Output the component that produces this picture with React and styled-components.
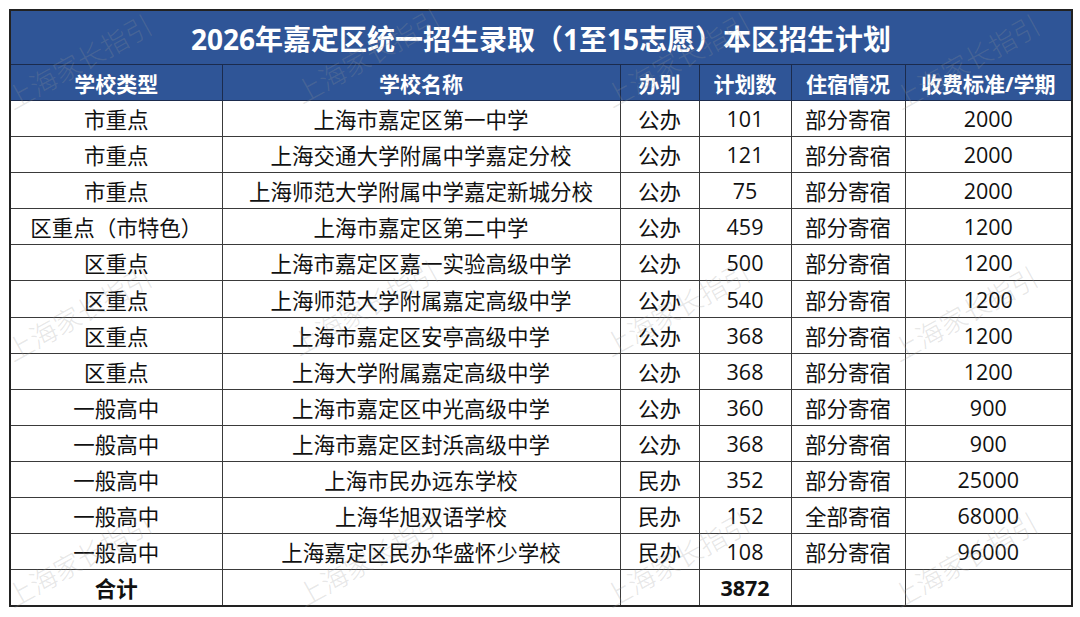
import React from "react";
import styled, { createGlobalStyle } from "styled-components";

const Global = createGlobalStyle`
  html, body { margin: 0; padding: 0; background: #ffffff; }
  body { font-family: "Open Sans", "Noto Sans CJK SC", sans-serif; color: #111; }
`;

const Page = styled.div`
  position: relative;
  width: 1080px;
  height: 617px;
  box-sizing: border-box;
  padding: 9px 0 0 9px;
  overflow: hidden;
  background: #fff;
`;

const Table = styled.table`
  width: 1062px;
  table-layout: fixed;
  border-collapse: collapse;
  border: 2px solid #222;
`;

const TitleCell = styled.th`
  height: 53px;
  padding: 0;
  background: #2f5597;
  color: #fff;
  font-size: 28px;
  font-weight: 700;
  text-align: center;
  border: 1px solid #1b2b4d;
`;

const HeadCell = styled.th`
  height: 35px;
  padding: 0;
  background: #2f5597;
  color: #fff;
  font-size: 21px;
  font-weight: 700;
  text-align: center;
  border: 1px solid #1b2b4d;
  white-space: nowrap;
`;

const Cell = styled.td`
  height: 35.1px;
  padding: 0;
  font-size: 21.5px;
  font-weight: ${(p) => (p.$bold ? 700 : 400)};
  color: #111;
  text-align: center;
  border: 1px solid #3a3a3a;
  white-space: nowrap;
  background: #fff;
`;

const Layer = styled.div`
  position: absolute;
  inset: 0;
  pointer-events: none;
`;

const Mark = styled.span`
  position: absolute;
  display: inline-block;
  font-family: "Noto Sans CJK SC", sans-serif;
  font-weight: 300;
  font-size: 27px;
  line-height: 1;
  white-space: nowrap;
  color: rgba(150, 150, 150, 0.24);
  transform-origin: 0 100%;
  transform: rotate(-29deg);
`;

const widths = [212, 398, 79, 92, 114, 167];
const heads = ["学校类型", "学校名称", "办别", "计划数", "住宿情况", "收费标准/学期"];

const rows = [
  ["市重点", "上海市嘉定区第一中学", "公办", "101", "部分寄宿", "2000"],
  ["市重点", "上海交通大学附属中学嘉定分校", "公办", "121", "部分寄宿", "2000"],
  ["市重点", "上海师范大学附属中学嘉定新城分校", "公办", "75", "部分寄宿", "2000"],
  ["区重点（市特色）", "上海市嘉定区第二中学", "公办", "459", "部分寄宿", "1200"],
  ["区重点", "上海市嘉定区嘉一实验高级中学", "公办", "500", "部分寄宿", "1200"],
  ["区重点", "上海师范大学附属嘉定高级中学", "公办", "540", "部分寄宿", "1200"],
  ["区重点", "上海市嘉定区安亭高级中学", "公办", "368", "部分寄宿", "1200"],
  ["区重点", "上海大学附属嘉定高级中学", "公办", "368", "部分寄宿", "1200"],
  ["一般高中", "上海市嘉定区中光高级中学", "公办", "360", "部分寄宿", "900"],
  ["一般高中", "上海市嘉定区封浜高级中学", "公办", "368", "部分寄宿", "900"],
  ["一般高中", "上海市民办远东学校", "民办", "352", "部分寄宿", "25000"],
  ["一般高中", "上海华旭双语学校", "民办", "152", "全部寄宿", "68000"],
  ["一般高中", "上海嘉定区民办华盛怀少学校", "民办", "108", "部分寄宿", "96000"],
];

const marks = [
  [14, 112], [303, 106], [613, 110], [902, 112],
  [14, 364], [300, 358], [612, 359], [900, 364],
  [14, 610], [305, 609], [612, 610], [900, 610],
];

export default function App() {
  return (
    <>
      <Global />
      <Page>
        <Table>
          <colgroup>
            {widths.map((w, i) => (
              <col key={i} style={{ width: w }} />
            ))}
          </colgroup>
          <thead>
            <tr>
              <TitleCell colSpan={6}>2026年嘉定区统一招生录取（1至15志愿）本区招生计划</TitleCell>
            </tr>
            <tr>
              {heads.map((h) => (
                <HeadCell key={h}>{h}</HeadCell>
              ))}
            </tr>
          </thead>
          <tbody>
            {rows.map((r, i) => (
              <tr key={i}>
                {r.map((c, j) => (
                  <Cell key={j}>{c}</Cell>
                ))}
              </tr>
            ))}
            <tr>
              <Cell $bold>合计</Cell>
              <Cell />
              <Cell />
              <Cell $bold>3872</Cell>
              <Cell />
              <Cell />
            </tr>
          </tbody>
        </Table>
        <Layer>
          {marks.map(([x, y], i) => (
            <Mark key={i} style={{ left: x, top: y - 27 }}>
              上海家长指引
            </Mark>
          ))}
        </Layer>
      </Page>
    </>
  );
}
